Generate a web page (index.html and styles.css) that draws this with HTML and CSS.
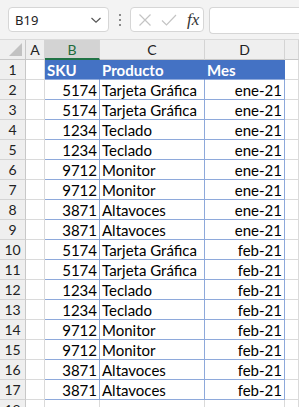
FILE: index.html
```html
<!DOCTYPE html>
<html>
<head>
<meta charset="UTF-8" />
<title>Hoja</title>
<link rel="stylesheet" href="styles.css">
</head>
<body>
<div class="bar">
	<div class="namebox"><span>B19</span>
		<svg class="chev" width="12" height="8" viewBox="0 0 12 8"><path d="M1.5 2 L6 6.2 L10.5 2" fill="none" stroke="#555" stroke-width="1.2"/></svg>
	</div>
	<div class="dots"><i></i><i></i><i></i></div>
	<div class="fxbox">
		<svg width="14" height="14" viewBox="0 0 14 14"><path d="M1.5 1.5 L12.5 12.5 M12.5 1.5 L1.5 12.5" stroke="#c4c4c4" stroke-width="1.2"/></svg>
		<svg width="16" height="14" viewBox="0 0 16 14"><path d="M1 7.5 L5.5 12 L15 2" fill="none" stroke="#c4c4c4" stroke-width="1.2"/></svg>
		<span class="fx">fx</span>
	</div>
	<div class="formula"></div>
</div>
<div class="sheet" id="sheet">
	<div class="corner"><span></span></div>
	<div class="colh">A</div>
	<div class="colh sel">B</div>
	<div class="colh">C</div>
	<div class="colh">D</div>
	<div class="colh">&nbsp;</div>
</div>
<script>
var rows = [
	['5174','Tarjeta Gráfica','ene-21'],
	['5174','Tarjeta Gráfica','ene-21'],
	['1234','Teclado','ene-21'],
	['1234','Teclado','ene-21'],
	['9712','Monitor','ene-21'],
	['9712','Monitor','ene-21'],
	['3871','Altavoces','ene-21'],
	['3871','Altavoces','ene-21'],
	['5174','Tarjeta Gráfica','feb-21'],
	['5174','Tarjeta Gráfica','feb-21'],
	['1234','Teclado','feb-21'],
	['1234','Teclado','feb-21'],
	['9712','Monitor','feb-21'],
	['9712','Monitor','feb-21'],
	['3871','Altavoces','feb-21'],
	['3871','Altavoces','feb-21']
];
var sheet = document.getElementById('sheet');
function cell(cls, txt){
	var d = document.createElement('div');
	d.className = cls;
	d.textContent = txt;
	sheet.appendChild(d);
}
cell('rowh', '1');
cell('c', '');
cell('c th', 'SKU');
cell('c th', 'Producto');
cell('c th', 'Mes');
cell('c', '');
rows.forEach(function(r, i){
	cell('rowh', i + 2);
	cell('c', '');
	cell('c td num', r[0]);
	cell('c td', r[1]);
	cell('c td num', r[2]);
	cell('c', '');
});
cell('rowh', '18');
cell('c', '');
cell('c', '');
cell('c', '');
cell('c', '');
cell('c', '');
</script>
</body>
</html>
```
FILE: styles.css
```css
body{
	margin: 0;
	padding: 0;
	background: #fff;
	font-family: Lato, "Liberation Sans", sans-serif;
	overflow: hidden;
}
.bar{
	height: 40px;
	background: #f3f3f3;
	display: flex;
	align-items: flex-start;
	padding-top: 7px;
	box-sizing: border-box;
	border-bottom: 1px solid #dadada;
}
.namebox{
	margin-left: 8px;
	width: 101px;
	height: 25px;
	box-sizing: border-box;
	background: #fff;
	border: 1px solid #d6d6d6;
	border-radius: 4px;
	display: flex;
	align-items: center;
	justify-content: space-between;
	padding: 0 6px 0 6px;
	font-family: "Noto Sans", sans-serif;
	font-size: 13px;
	color: #222;
}
.dots{
	width: 21px;
	height: 25px;
	display: flex;
	flex-direction: column;
	align-items: center;
	justify-content: center;
	gap: 3px;
}
.dots i{
	width: 2px;
	height: 2px;
	background: #8a8a8a;
	display: block;
}
.fxbox{
	width: 74px;
	height: 25px;
	box-sizing: border-box;
	background: #fff;
	border: 1px solid #d6d6d6;
	border-radius: 4px;
	display: flex;
	align-items: center;
	gap: 9px;
	padding-left: 7px;
}
.fx{
	font-family: "Liberation Serif", serif;
	font-style: italic;
	font-size: 17px;
	color: #333;
	margin-left: 1px;
}
.formula{
	margin-left: 5px;
	flex: 1;
	height: 25px;
	background: #fff;
	border: 1px solid #d6d6d6;
	border-right: 0;
	border-radius: 4px 0 0 4px;
}
.sheet{
	display: grid;
	grid-template-columns: 26px 19px 55px 105px 80px 1fr;
	grid-auto-rows: 20px;
	font-size: 15px;
	color: #000;
}
.corner{
	background: #efefef;
	border-right: 1px solid #c8c8c8;
	border-bottom: 1px solid #c8c8c8;
	position: relative;
}
.corner span{
	position: absolute;
	right: 3px;
	bottom: 3px;
	width: 0;
	height: 0;
	border-left: 13px solid transparent;
	border-bottom: 13px solid #c2c2c2;
}
.colh{
	background: #efefef;
	border-right: 1px solid #d4d4d4;
	border-bottom: 1px solid #c8c8c8;
	text-align: center;
	line-height: 20px;
	font-size: 14px;
	color: #222;
}
.colh.sel{
	background: #d3d3d3;
	color: #1d6b3c;
	border-bottom: 2px solid #217346;
	line-height: 19px;
}
.rowh{
	background: #efefef;
	border-right: 1px solid #c8c8c8;
	border-bottom: 1px solid #d4d4d4;
	text-align: center;
	line-height: 20px;
	font-size: 14px;
	color: #222;
}
.c{
	border-right: 1px solid #dadada;
	border-bottom: 1px solid #dadada;
	line-height: 20px;
	padding: 0 2px;
	white-space: nowrap;
	overflow: hidden;
}
.th{
	background: #4472c4;
	color: #fff;
	font-weight: bold;
	border-right-color: #4472c4;
	border-bottom-color: #8ea9db;
}
.th:nth-child(n){
	border-right: 1px solid #4472c4;
}
.td{
	border-right: 1px solid #8ea9db;
	border-bottom: 1px solid #8ea9db;
}
.num{
	text-align: right;
}
```
